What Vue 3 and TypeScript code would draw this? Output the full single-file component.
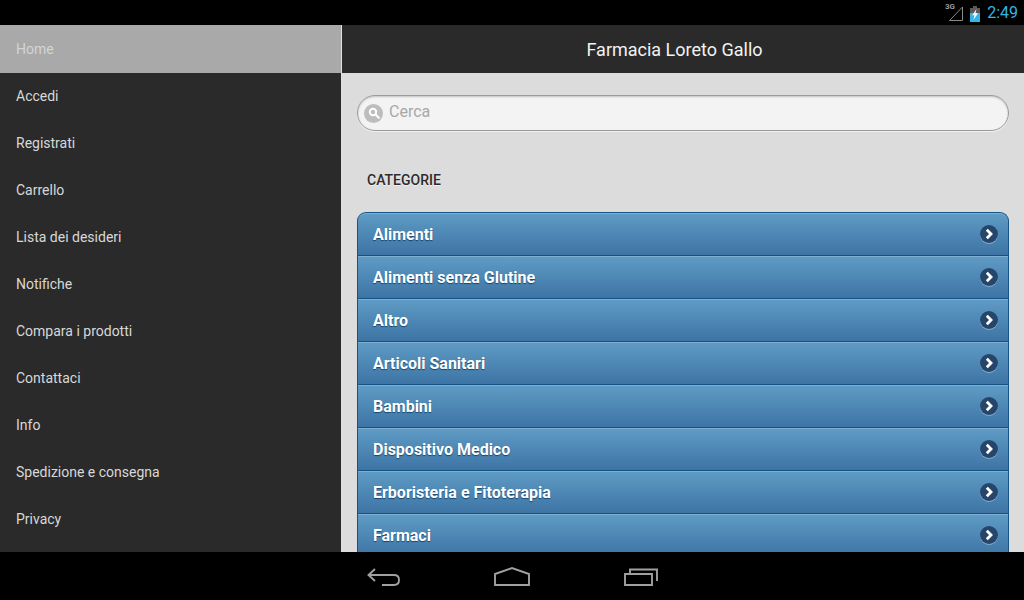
<script setup lang="ts">
const menu: string[] = ['Accedi','Registrati','Carrello','Lista dei desideri','Notifiche','Compara i prodotti','Contattaci','Info','Spedizione e consegna','Privacy'];
const cats: string[] = ['Alimenti','Alimenti senza Glutine','Altro','Articoli Sanitari','Bambini','Dispositivo Medico','Erboristeria e Fitoterapia','Farmaci'];
</script>

<template>
  <div class="screen">
    <header class="status">
      <span class="net">3G</span>
      <svg class="signal" width="14" height="15" viewBox="0 0 14 15"><path d="M0.500 14.500H13.500V1Z" fill="none" stroke="#8a8a8a" stroke-width="1"/></svg>
      <svg class="battery" width="10" height="16" viewBox="0 0 10 16"><path d="M3 0H7V2H10V16H0V2H3Z" fill="#5a5a5a"/><path d="M0 7H10V16H0Z" fill="#33b5e5"/><path d="M6.500 3L2.200 9.200H4.600L3.400 14L8 7.200H5.400Z" fill="#fff"/></svg>
      <span class="clock">2:49</span>
    </header>
    <div class="body">
      <aside class="side">
        <div class="side-item active">Home</div>
        <div v-for="m in menu" :key="m" class="side-item">{{ m }}</div>
      </aside>
      <main class="main">
        <div class="title">Farmacia Loreto Gallo</div>
        <div class="content">
          <div class="search">
            <span class="search-ic">
              <svg width="12" height="12" viewBox="0 0 12 12"><circle cx="5" cy="5" r="3.200" fill="none" stroke="#fff" stroke-width="2"/><path d="M7.500 7.500L10.800 10.800" stroke="#fff" stroke-width="2.200" stroke-linecap="round"/></svg>
            </span>
            <span class="placeholder">Cerca</span>
          </div>
          <div class="cat-label">CATEGORIE</div>
          <ul class="list">
            <li v-for="c in cats" :key="c" class="row">
              <span class="row-text">{{ c }}</span>
              <span class="arrow">
                <svg width="12" height="12" viewBox="0 0 12 12"><path d="M3.800 1.800L8 6L3.800 10.200" fill="none" stroke="#fff" stroke-width="2.800"/></svg>
              </span>
            </li>
          </ul>
        </div>
      </main>
    </div>
    <footer class="nav">
      <svg width="33" height="20" viewBox="0 0 33 20"><path d="M8 3L1.500 9L8 15M1.500 9H27Q32 9 32 14T27 19H15" fill="none" stroke="#a0a0a0" stroke-width="1.900"/></svg>
      <svg width="36" height="20" viewBox="0 0 36 20"><path d="M1 8L18 2L35 8V19H1Z" fill="none" stroke="#a0a0a0" stroke-width="1.900"/></svg>
      <svg width="34" height="20" viewBox="0 0 34 20"><path d="M1 8H28V19H1ZM6 8V3.500H33V15" fill="none" stroke="#a0a0a0" stroke-width="1.900"/></svg>
    </footer>
  </div>
</template>

<style>
html, body { margin: 0; padding: 0; background: #000; }
</style>

<style scoped>
.screen { width: 1024px; height: 600px; display: flex; flex-direction: column; overflow: hidden; font-family: Roboto, "Liberation Sans", sans-serif; background: #000; }
.status { height: 25px; flex: none; display: flex; align-items: center; justify-content: flex-end; background: #000; position: relative; padding-right: 6px; box-sizing: border-box; }
.net { position: absolute; left: 945px; top: 2px; font-size: 8px; line-height: 10px; font-weight: 700; color: #9a9a9a; }
.signal { margin-right: 7px; margin-top: 2px; }
.battery { margin-right: 7px; margin-top: 2px; }
.clock { color: #33b5e5; font-size: 16px; line-height: 25px; }
.body { flex: 1; min-height: 0; display: flex; }
.side { width: 341px; flex: none; background: #2a2a2a; overflow: hidden; }
.side-item { height: 47px; line-height: 47px; padding-left: 16px; font-size: 14px; color: #d8d8d8; }
.side-item.active { height: 48px; line-height: 49px; background: #a9a9a9; color: #d4d4d4; }
.main { flex: 1; min-width: 0; display: flex; flex-direction: column; border-left: 1px solid #e0e0e0; }
.title { height: 48px; flex: none; background: #2a2a2a; color: #f2f2f2; font-size: 18px; line-height: 50px; text-align: center; padding-right: 17px; }
.content { flex: 1; min-height: 0; overflow: hidden; background: #dcdcdc; padding: 22px 15px 0; }
.search { height: 36px; box-sizing: border-box; border: 1px solid #9a9a9a; border-radius: 18px; background: #f3f3f3; box-shadow: inset 0 1px 2px rgba(0,0,0,.2), 0 1px 0 #f0f0f0; display: flex; align-items: center; padding-left: 6px; }
.search-ic { width: 19px; height: 19px; border-radius: 50%; background: #bdbdbd; display: flex; align-items: center; justify-content: center; }
.placeholder { margin: 0 0 3px 6px; font-size: 16px; color: #a8a8a8; }
.cat-label { margin-top: 40px; padding-left: 10px; font-size: 14px; line-height: 18px; font-weight: 500; color: #2b2b2b; text-shadow: 0 1px 0 #f0f0f0; }
.list { list-style: none; margin: 23px 0 0; padding: 0; }
.row { height: 43px; box-sizing: border-box; display: flex; align-items: center; justify-content: space-between; padding: 0 10px 0 15px; border: 1px solid #145383; border-bottom: 0; background: linear-gradient(#5f9cc5, #3d74a5); box-shadow: inset 0 1px 0 #7fb0d2; }
.row:first-child { border-radius: 9px 9px 0 0; }
.row-text { font-size: 16px; font-weight: 700; color: #fff; text-shadow: 0 1px 1px #14466e; }
.arrow { width: 18px; height: 18px; border-radius: 50%; background: #26456a; box-shadow: 0 1px 0 rgba(255,255,255,.35); display: flex; align-items: center; justify-content: center; }
.nav { height: 48px; flex: none; box-sizing: border-box; background: #000; display: flex; align-items: center; justify-content: center; gap: 94px; padding-left: 1px; }
</style>
